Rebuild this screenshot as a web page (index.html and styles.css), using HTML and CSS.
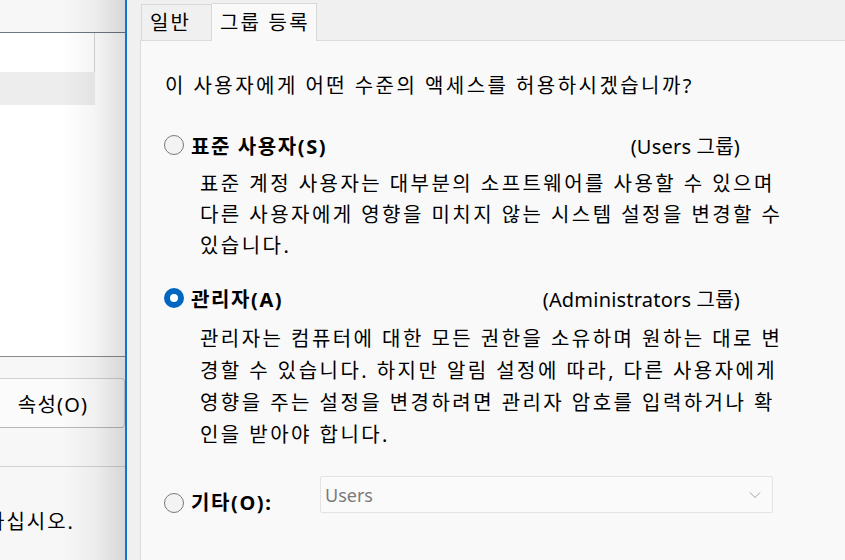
FILE: index.html
```html
<!DOCTYPE html>
<html>
  <head>
    <title>그룹 등록</title>
    <link rel="stylesheet" href="styles.css">
  </head>
  <body>
    <div class="screen">
      <div class="behind">
        <div class="behind-top"></div>
        <div class="behind-list">
          <div class="list-row"></div>
          <div class="list-row selected"></div>
        </div>
        <div class="behind-bar">
          <div class="behind-btn">속성(O)</div>
        </div>
        <div class="behind-foot">하십시오.</div>
      </div>

      <div class="dialog">
        <div class="tabs">
          <div class="tab">일반</div>
          <div class="tab active">그룹 등록</div>
        </div>

        <div class="panel">
          <p class="question">이 사용자에게 어떤 수준의 액세스를 허용하시겠습니까?</p>

          <div class="option">
            <div class="option-head">
              <span class="radio"></span>
              <span class="label">표준 사용자(S)</span>
              <span class="group">(Users 그룹)</span>
            </div>
            <p class="desc">표준 계정 사용자는 대부분의 소프트웨어를 사용할 수 있으며<br>다른 사용자에게 영향을 미치지 않는 시스템 설정을 변경할 수<br>있습니다.</p>
          </div>

          <div class="option">
            <div class="option-head">
              <span class="radio checked"></span>
              <span class="label">관리자(A)</span>
              <span class="group">(Administrators 그룹)</span>
            </div>
            <p class="desc">관리자는 컴퓨터에 대한 모든 권한을 소유하며 원하는 대로 변<br>경할 수 있습니다. 하지만 알림 설정에 따라, 다른 사용자에게<br>영향을 주는 설정을 변경하려면 관리자 암호를 입력하거나 확<br>인을 받아야 합니다.</p>
          </div>

          <div class="option-head other">
            <span class="radio"></span>
            <span class="label">기타(O):</span>
            <div class="select">
              <span>Users</span>
              <svg class="chevron" width="12" height="8" viewBox="0 0 12 8">
                <path d="M1 1.5 L6 6.5 L11 1.5" fill="none" stroke="#a0a0a0" stroke-width="1"/>
              </svg>
            </div>
          </div>
        </div>
      </div>
    </div>
  </body>
</html>
```

FILE: styles.css
```css
* {
  margin: 0;
  padding: 0;
  box-sizing: border-box;
}

body {
  font-family: "Noto Sans", "Noto Sans CJK KR", sans-serif;
  width: 845px;
  height: 560px;
  overflow: hidden;
  background: #f0f0f0;
  color: #000;
}

.screen {
  display: flex;
  height: 560px;
}

/* window behind the dialog */
.behind {
  width: 125px;
  flex: none;
  position: relative;
  display: flex;
  flex-direction: column;
  background: #fff;
}

.behind::after {
  content: '';
  position: absolute;
  top: 0;
  left: 0;
  right: 0;
  bottom: 0;
  background: linear-gradient(90deg, rgba(0, 0, 0, 0) 0%, rgba(0, 0, 0, 0) 50%, rgba(0, 0, 0, 0.04) 75%, rgba(0, 0, 0, 0.13) 100%);
  pointer-events: none;
}

.behind-top {
  height: 33px;
  background: #f7f7f7;
  border-bottom: 1px solid #6e7680;
}

.behind-list {
  height: 324px;
  border-bottom: 1px solid #8a8a8a;
}

.list-row {
  width: 95px;
  height: 39px;
  border-right: 1px solid #d4d4d4;
}

.list-row.selected {
  height: 33px;
  background: #ededed;
  border-right: none;
}

.behind-bar {
  height: 110px;
  padding-top: 21px;
  background: #f7f7f7;
  border-bottom: 1px solid #d2d2d2;
}

.behind-btn {
  height: 50px;
  border-top: 1px solid #cfcfcf;
  border-bottom: 1px solid #b8b8b8;
  border-right: 1px solid #cfcfcf;
  border-radius: 0 4px 4px 0;
  display: flex;
  align-items: center;
  justify-content: center;
  padding-right: 18px;
  font-size: 20px;
  letter-spacing: 1.2px;
  background: #fbfbfb;
}

.behind-foot {
  flex: 1;
  background: #f7f7f7;
  padding-top: 39px;
  margin-left: -14px;
  font-size: 20px;
  letter-spacing: 2px;
  white-space: nowrap;
}

/* dialog */
.dialog {
  flex: 1;
  display: flex;
  flex-direction: column;
  border-left: 2px solid #1273d6;
  background: #f0f0f0;
}

.tabs {
  display: flex;
  align-items: flex-end;
  height: 40px;
  padding-left: 14px;
}

.tab {
  height: 36px;
  padding: 0 4px 0 8px;
  width: 71px;
  border: 1px solid #d9d9d9;
  border-bottom: none;
  font-size: 20px;
  line-height: 36px;
  letter-spacing: 2.2px;
  white-space: nowrap;
  background: #f0f0f0;
}

.tab.active {
  width: 105px;
  height: 38px;
  line-height: 38px;
  background: #f9f9f9;
  border-left: none;
  margin-bottom: -1px;
  position: relative;
}

.panel {
  flex: 1;
  margin-left: 13px;
  background: #f9f9f9;
  border-top: 1px solid #dcdcdc;
  border-left: 1px solid #dcdcdc;
  padding: 30px 0 0 23px;
  font-size: 20px;
  letter-spacing: 2.45px;
}

.question {
  line-height: 30px;
  padding-left: 1px;
  margin-bottom: 29px;
  white-space: nowrap;
}

.option-head {
  display: flex;
  align-items: center;
  width: 576px;
  height: 30px;
}

.radio {
  width: 20px;
  height: 20px;
  flex: none;
  border-radius: 50%;
  border: 1px solid #7a7a7a;
  background: #f3f3f3;
  margin-right: 7px;
}

.radio.checked {
  border: 6px solid #0067c0;
  background: #fff;
}

.label {
  font-weight: 700;
  letter-spacing: 1.6px;
}

.group {
  margin-left: auto;
  letter-spacing: 0.2px;
}

.desc {
  padding-left: 36px;
  margin-top: 8px;
  margin-bottom: 22px;
  line-height: 31px;
  white-space: nowrap;
}

.option:nth-of-type(2) .desc {
  margin-top: 10px;
  line-height: 32px;
  margin-bottom: 25px;
}

.option-head.other {
  width: 609px;
  height: 37px;
  align-items: flex-end;
}

.other .label {
  line-height: 20px;
}

.select {
  margin-left: auto;
  width: 453px;
  height: 37px;
  border: 1px solid #e3e3e3;
  border-radius: 2px;
  background: #fafafa;
  display: flex;
  align-items: center;
  justify-content: space-between;
  padding: 0 11px 0 4px;
  color: #7a7a7a;
  font-size: 18px;
  letter-spacing: 0;
}
```
